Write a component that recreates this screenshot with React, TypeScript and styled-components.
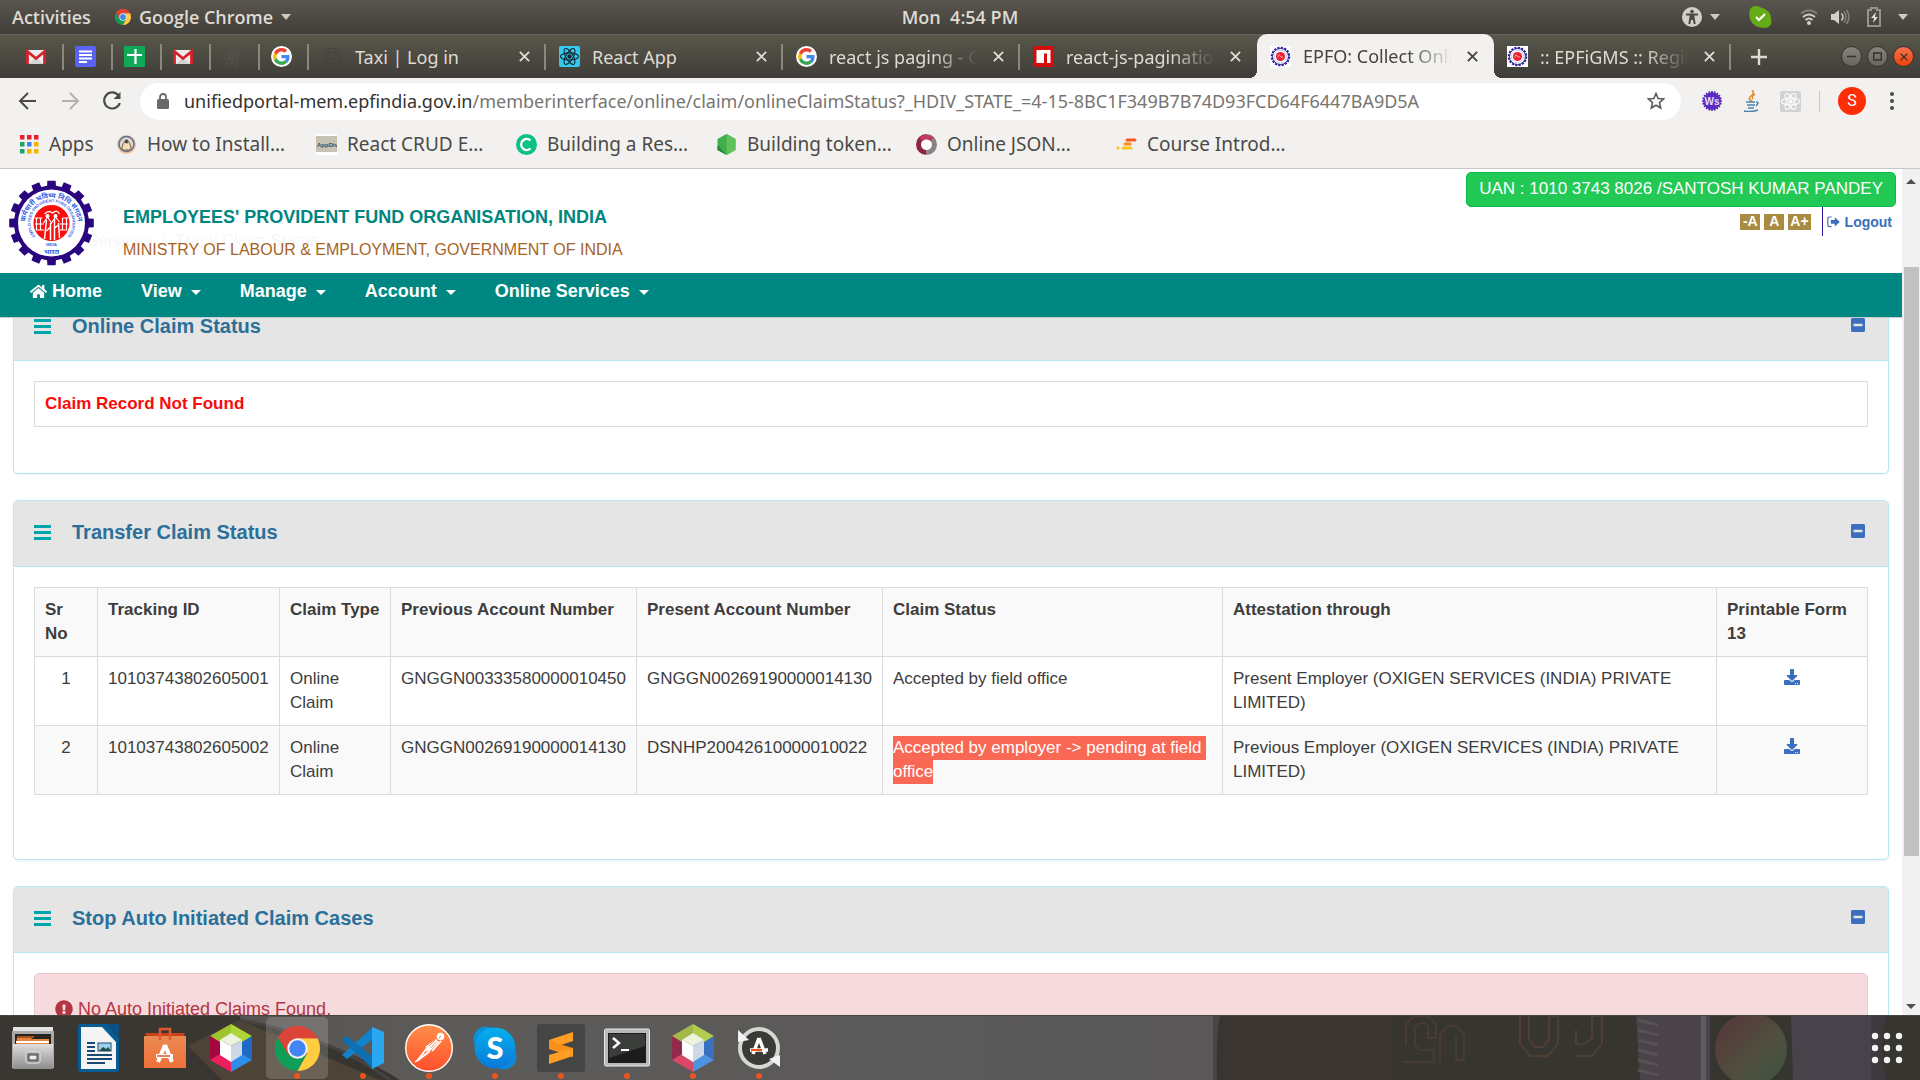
import React from "react";
import styled, { createGlobalStyle, css } from "styled-components";
import { FaHome, FaMinusSquare, FaDownload, FaExclamationCircle } from "react-icons/fa";

const UI_FONT = `"Noto Sans", "Open Sans", sans-serif`;
const PAGE_FONT = `"Liberation Sans", Arial, sans-serif`;

const GlobalStyle = createGlobalStyle`
  *, *::before, *::after { box-sizing: border-box; }
  body { margin: 0; background: #35342f; }
  button { font: inherit; color: inherit; border: 0; padding: 0; background: none; cursor: pointer; }
  a { color: inherit; text-decoration: none; }
  svg { display: block; flex: none; }
`;

const Desktop = styled.div`
  display: flex;
  flex-direction: column;
  height: 100vh;
  overflow: hidden;
  font-family: ${UI_FONT};
`;

/* ---------- system bar ---------- */

const SystemBar = styled.header`
  display: grid;
  grid-template-columns: 1fr auto 1fr;
  align-items: center;
  flex: none;
  height: 34px;
  padding: 0 12px;
  color: #dfdbd2;
  background: linear-gradient(#5a554e, #403e39);
  font-family: "Open Sans", "Noto Sans", sans-serif;
  font-size: 18px;
  font-weight: 600;
  line-height: 24px;
  white-space: pre;
`;

const SystemGroup = styled.div<{ $end?: boolean }>`
  display: flex;
  align-items: center;
  gap: 24px;
  justify-content: ${(p) => (p.$end ? "flex-end" : "flex-start")};
`;

const SystemButton = styled.button`
  display: flex;
  align-items: center;
  gap: 8px;
`;

/* ---------- tab strip ---------- */

const TabStrip = styled.div`
  display: flex;
  align-items: stretch;
  flex: none;
  height: 44px;
  padding-left: 15px;
  background: linear-gradient(#58574b, #3f3d38);
  border-top: 1px solid #66645a;
`;

const tabSeparator = css`
  &::after {
    content: "";
    flex: none;
    width: 2px;
    height: 26px;
    background: #8b897f;
  }
`;

const PinnedTab = styled.button`
  display: flex;
  align-items: center;
  width: 49px;
  padding-left: 11px;
  justify-content: space-between;
  ${tabSeparator}
`;

const Tab = styled.div<{ $active?: boolean; $plain?: boolean }>`
  position: relative;
  display: flex;
  align-items: center;
  flex: 0 1 237px;
  min-width: 0;
  gap: 12px;
  padding-left: 13px;
  color: #dfdbd2;
  ${(p) => !p.$active && !p.$plain && tabSeparator}
  ${(p) =>
    p.$active &&
    css`
      color: #45433f;
      background: #f2f1f0;
      border-radius: 10px 10px 0 0;
      margin-top: -1px;
      padding-right: 14px;
      &::before,
      &::after {
        content: "";
        position: absolute;
        bottom: 0;
        width: 8px;
        height: 8px;
      }
      &::before {
        left: -8px;
        background: radial-gradient(circle at 0 0, transparent 8px, #f2f1f0 8px);
      }
      &::after {
        right: -8px;
        background: radial-gradient(circle at 100% 0, transparent 8px, #f2f1f0 8px);
      }
    `}
  ${(p) => p.$plain && css`padding-right: 14px;`}
`;

const TabTitle = styled.span<{ $fade?: boolean }>`
  flex: 1;
  min-width: 0;
  overflow: hidden;
  white-space: nowrap;
  font-size: 18px;
  line-height: 26px;
  ${(p) => p.$fade && css`mask-image: linear-gradient(90deg, #000 70%, transparent);`}
`;

const TabClose = styled.button`
  display: flex;
  align-items: center;
  justify-content: center;
  width: 16px;
  height: 24px;
`;

const NewTab = styled.button`
  display: flex;
  align-items: center;
  justify-content: center;
  width: 56px;
  color: #dfdbd2;
`;

const WindowButtons = styled.div`
  display: flex;
  align-items: center;
  gap: 5px;
  margin-left: auto;
  padding-right: 6px;
`;

const WindowButton = styled.button<{ $close?: boolean }>`
  display: flex;
  align-items: center;
  justify-content: center;
  width: 21px;
  height: 21px;
  border: 1px solid #33322d;
  border-radius: 50%;
  color: #33322d;
  background: ${(p) => (p.$close ? "linear-gradient(#f7734c, #ee4208)" : "linear-gradient(#85837b, #66645d)")};
`;

/* ---------- toolbar and bookmarks ---------- */

const Toolbar = styled.div`
  display: flex;
  align-items: center;
  flex: none;
  height: 46px;
  padding: 0 24px 0 16px;
  background: #f2f1f0;
  color: #4b4a46;
`;

const NavButtons = styled.div`
  display: flex;
  gap: 18px;
  padding-right: 16px;
`;

const AddressBar = styled.form`
  display: flex;
  align-items: center;
  flex: 1;
  min-width: 0;
  height: 37px;
  padding: 0 16px;
  gap: 14px;
  border-radius: 19px;
  background: #fff;
`;

const AddressBox = styled.div`
  flex: 1;
  min-width: 0;
  font-size: 18px;
  line-height: 26px;
  color: #77756f;
  white-space: nowrap;
  overflow: hidden;
`;

const AddressHost = styled.span`
  color: #33322f;
`;

const ToolbarIcons = styled.div`
  display: flex;
  align-items: center;
  gap: 18px;
  padding-left: 20px;
`;

const Divider = styled.span`
  width: 1px;
  height: 21px;
  background: #c9c7c4;
`;

const Avatar = styled.button`
  width: 28px;
  height: 28px;
  border-radius: 50%;
  color: #fff;
  background: #fb2e06;
  font-family: Roboto, sans-serif;
  font-size: 16px;
  line-height: 28px;
`;

const BookmarkBar = styled.nav`
  display: flex;
  align-items: center;
  flex: none;
  height: 45px;
  padding-left: 18px;
  padding-bottom: 4px;
  background: #f2f1f0;
  border-bottom: 1px solid #c9c7c5;
  color: #4b4a46;
  font-size: 19px;
  line-height: 26px;
`;

const Bookmark = styled.a<{ $short?: boolean }>`
  display: flex;
  align-items: center;
  gap: 10px;
  width: ${(p) => (p.$short ? "98px" : "200px")};
  white-space: nowrap;
`;

/* ---------- portal page ---------- */

const Viewport = styled.div`
  display: flex;
  flex: 1;
  min-height: 0;
  background: #fff;
  font-family: ${PAGE_FONT};
`;

const PageArea = styled.div`
  position: relative;
  flex: 1;
  min-width: 0;
  overflow: hidden;
`;

const PageHeader = styled.div`
  position: absolute;
  inset: 0 0 auto 0;
  z-index: 1;
`;

const Masthead = styled.div`
  display: flex;
  align-items: flex-start;
  height: 104px;
  padding: 3px 6px 0 9px;
  background: rgba(255, 255, 255, 0.93);
`;

const MastheadTitles = styled.div`
  flex: 1;
  padding: 33px 0 0 29px;
`;

const OrgName = styled.h1`
  margin: 0;
  color: #00857f;
  font-size: 18px;
  line-height: 24px;
`;

const Ministry = styled.p`
  margin: 9px 0 0;
  color: #a8641e;
  font-size: 16px;
  line-height: 24px;
`;

const LogoSlot = styled.div`
  padding-top: 8px;
`;

const MastheadSide = styled.div`
  display: flex;
  flex-direction: column;
  align-items: flex-end;
`;

const UanBadge = styled.button`
  height: 35px;
  padding: 0 12px 2px;
  border: 1px solid #0eb848;
  border-radius: 5px;
  color: #fff;
  background: #22c955;
  font-size: 17px;
  line-height: 31px;
`;

const AccountTools = styled.div`
  display: flex;
  gap: 4px;
  align-items: center;
  height: 29px;
  padding-right: 4px;
`;

const FontSizeButton = styled.button`
  min-width: 20px;
  height: 16px;
  padding: 0 2px;
  color: #fff;
  background: #a98b41;
  font-size: 14px;
  font-weight: 700;
  line-height: 15px;
`;

const Logout = styled.a`
  display: flex;
  align-items: center;
  gap: 5px;
  height: 29px;
  margin-left: 7px;
  padding-left: 4px;
  border-left: 1px solid #2e1a9b;
  color: #3a6fbd;
  font-size: 14px;
  font-weight: 700;
`;

const NavBar = styled.nav`
  display: flex;
  gap: 39px;
  height: 45px;
  padding: 6px 30px 0;
  background: #008782;
  border-bottom: 1px solid #c4cfce;
  color: #fff;
  font-size: 18px;
  font-weight: 700;
  line-height: 24px;
`;

const NavItem = styled.a<{ $tight?: boolean }>`
  display: flex;
  align-items: center;
  height: 24px;
  gap: ${(p) => (p.$tight ? "5px" : "9px")};
`;

const Caret = styled.span`
  width: 0;
  height: 0;
  margin-top: 3px;
  border: 5px solid transparent;
  border-top-color: currentColor;
  border-bottom: 0;
`;

const PageContent = styled.main`
  padding: 60px 13px 0;
`;

const Breadcrumb = styled.p`
  margin: 0;
  padding-left: 20px;
  color: #6c757d;
  font-size: 17px;
  line-height: 24px;
  white-space: pre;
`;

const Panel = styled.section`
  margin-bottom: 26px;
  border: 1px solid #b5e8ef;
  border-radius: 5px;
  background: #fff;
  box-shadow: 0 1px 2px rgba(0, 0, 0, 0.06);
  &:first-of-type {
    margin-top: 41px;
  }
`;

const PanelHeading = styled.div`
  display: flex;
  align-items: center;
  height: 66px;
  padding: 0 22px 3px 20px;
  border-bottom: 1px solid #b5e8ef;
  border-radius: 4px 4px 0 0;
  background: #e5e5e5;
  color: #00a5ac;
`;

const PanelTitle = styled.h2`
  flex: 1;
  margin: 0 0 0 21px;
  color: #2c6f99;
  font-size: 20px;
  line-height: 24px;
`;

const CollapseButton = styled.button`
  padding-bottom: 2px;
  color: #3a6fbd;
`;

const PanelBody = styled.div<{ $space: number }>`
  padding: 20px 20px ${(p) => p.$space}px;
`;

const EmptyNotice = styled.p`
  height: 46px;
  margin: 0;
  padding: 10px;
  border: 1px solid #dcdcdc;
  color: #f90b0b;
  font-size: 17px;
  font-weight: 700;
  line-height: 24px;
`;

const ClaimTable = styled.table`
  width: 100%;
  border-collapse: collapse;
  table-layout: fixed;
  color: #3d3d3d;
  font-size: 17px;
  line-height: 24px;

  th,
  td {
    padding: 10px 8px 10px 10px;
    border: 1px solid #dadbdb;
    text-align: left;
    vertical-align: top;
  }
  thead tr,
  tbody tr:nth-child(even) {
    background: #f9f9f9;
  }
`;

const Column = styled.col<{ $width?: number }>`
  width: ${(p) => (p.$width ? `${p.$width}px` : "auto")};
`;

const CenteredCell = styled.td`
  && {
    padding: 10px;
    text-align: center;
  }
`;

const StatusCell = styled.td`
  white-space: break-spaces;
`;

const Selected = styled.span`
  padding: 2px 0 3px;
  color: #fff;
  background: #f96854;
`;

const DownloadLink = styled.a`
  display: flex;
  justify-content: center;
  padding-top: 2px;
  color: #3a6fbd;
`;

const Alert = styled.p`
  display: flex;
  align-items: center;
  gap: 5px;
  margin: 0;
  height: 72px;
  padding: 0 20px;
  border: 1px solid #efc8ce;
  border-radius: 5px;
  background: #f5dbde;
  color: #b43442;
  font-size: 18px;
  line-height: 24px;
`;

const ScrollTrack = styled.div`
  display: flex;
  flex-direction: column;
  align-items: center;
  width: 18px;
  padding: 10px 0 6px;
  background: #f1f1f1;
`;

const ScrollThumb = styled.div`
  width: 15px;
  height: 71%;
  margin: 83px 0 auto;
  background: #c1c1c1;
`;

const ScrollArrow = styled.span<{ $down?: boolean }>`
  width: 0;
  height: 0;
  border: 5px solid transparent;
  ${(p) => (p.$down ? "border-top-color: #505050; border-bottom: 0;" : "border-bottom-color: #505050; border-top: 0;")}
`;

/* ---------- dock ---------- */

const Dock = styled.footer`
  position: relative;
  display: flex;
  align-items: stretch;
  flex: none;
  height: 65px;
  border-top: 1px solid #45443f;
  background: #363530;
`;

const DockWallpaper = styled.svg`
  position: absolute;
  inset: 0;
  width: 100%;
  height: 100%;
`;

const DockItem = styled.button<{ $active?: boolean; $running?: boolean }>`
  position: relative;
  display: flex;
  align-items: center;
  justify-content: center;
  width: 62px;
  height: 62px;
  margin: 1px 2px;
  border-radius: 5px;
  background: ${(p) => (p.$active ? "rgba(255, 255, 255, 0.17)" : "none")};
  ${(p) =>
    p.$running &&
    css`
      &::after {
        content: "";
        position: absolute;
        bottom: 0;
        left: 28px;
        width: 6px;
        height: 6px;
        border-radius: 50%;
        background: #e95420;
      }
    `}
`;

const AppsButton = styled.button`
  position: relative;
  margin-left: auto;
  padding-right: 17px;
`;

/* ---------- drawings ---------- */

const DownTriangle = () => (
  <svg width="10" height="6" viewBox="0 0 10 6"><path d="M0 0h10L5 6z" fill="#cfcbc2" /></svg>
);

const CloseX = ({ size = 11 }: { size?: number }) => (
  <svg width={size} height={size} viewBox="0 0 10 10"><path d="M.8.8l8.400 8.400M9.200.8L.8 9.200" stroke="currentColor" strokeWidth="1.700" /></svg>
);

const MenuBars = () => (
  <svg width="17" height="15" viewBox="0 0 17 15"><path d="M0 0h17v3H0zM0 6h17v3H0zM0 12h17v3H0z" fill="currentColor" /></svg>
);

const ChromeIcon = ({ size }: { size: number }) => (
  <svg width={size} height={size} viewBox="0 0 44 44">
    <circle cx="22" cy="22" r="22" fill="#db4437" />
    <path d="M2.900 11A22 22 0 0 0 22 44L31.500 27.500 12.500 27.500z" fill="#0f9d58" />
    <path d="M22 12H41.600A22 22 0 0 1 22 44L31.500 27z" fill="#ffcd40" />
    <path d="M2.900 11A22 22 0 0 1 41.600 12H22L12 22z" fill="#db4437" />
    <circle cx="22" cy="22" r="10" fill="#f1f1f1" />
    <circle cx="22" cy="22" r="8" fill="#4285f4" />
  </svg>
);

const GmailIcon = () => (
  <svg width="20" height="16" viewBox="0 0 20 16">
    <rect x="1" y="1" width="18" height="14" rx="1" fill="#ececec" />
    <path d="M3 15l7-7 7 7z" fill="#d4d4d4" />
    <path d="M1.500 15V2.500L10 9.500l8.500-7V15" fill="none" stroke="#d8222a" strokeWidth="2.800" />
  </svg>
);

const DocsIcon = () => (
  <svg width="21" height="21" viewBox="0 0 21 21">
    <rect width="21" height="21" rx="2" fill="#5b63f5" />
    <path d="M4 5.500h13M4 9h13M4 12.500h13M4 16h8" stroke="#fff" strokeWidth="1.900" />
  </svg>
);

const SheetsIcon = () => (
  <svg width="21" height="21" viewBox="0 0 21 21">
    <rect width="21" height="21" rx="1" fill="#0fa958" />
    <path d="M3 9h15M11.500 3v15" stroke="#fff" strokeWidth="2.200" />
  </svg>
);

const Atom = ({ stroke, bg, r = 2 }: { stroke: string; bg?: string; r?: number }) => (
  <svg width="21" height="21" viewBox="0 0 21 21" fill="none" stroke={stroke} strokeWidth="1.100">
    {bg && <rect width="21" height="21" rx={r} fill={bg} stroke="none" />}
    <ellipse cx="10.500" cy="10.500" rx="9" ry="3.600" />
    <ellipse cx="10.500" cy="10.500" rx="9" ry="3.600" transform="rotate(60 10.500 10.500)" />
    <ellipse cx="10.500" cy="10.500" rx="9" ry="3.600" transform="rotate(120 10.500 10.500)" />
    <circle cx="10.500" cy="10.500" r="1.600" fill={stroke} />
  </svg>
);

const GoogleIcon = () => (
  <svg width="21" height="21" viewBox="0 0 48 48">
    <circle cx="24" cy="24" r="24" fill="#fff" />
    <g transform="translate(4.800 4.800) scale(.8)">
      <path fill="#EA4335" d="M24 9.500c3.540 0 6.710 1.220 9.210 3.600l6.850-6.850C35.900 2.380 30.470 0 24 0 14.620 0 6.510 5.380 2.560 13.220l7.980 6.190C12.430 13.720 17.740 9.500 24 9.500z" />
      <path fill="#4285F4" d="M46.980 24.550c0-1.570-.15-3.090-.38-4.550H24v9.020h12.940c-.58 2.960-2.260 5.480-4.780 7.180l7.730 6c4.510-4.180 7.090-10.360 7.090-17.650z" />
      <path fill="#FBBC05" d="M10.530 28.590c-.48-1.450-.76-2.990-.76-4.590s.27-3.140.76-4.590l-7.980-6.190C.92 16.460 0 20.120 0 24c0 3.880.92 7.540 2.560 10.780l7.970-6.190z" />
      <path fill="#34A853" d="M24 48c6.480 0 11.930-2.130 15.890-5.810l-7.730-6c-2.150 1.450-4.920 2.300-8.160 2.300-6.260 0-11.570-4.220-13.470-9.910l-7.980 6.190C6.510 42.620 14.620 48 24 48z" />
    </g>
  </svg>
);

const FirefoxGhost = () => (
  <svg width="21" height="21" viewBox="0 0 21 21" fill="none" stroke="#45443f" strokeWidth="1.500">
    <circle cx="10.500" cy="10.500" r="8" />
    <path d="M5 9c2-4 8-4 10-1-2 0-3 1-2 3s-3 3-5 1" />
  </svg>
);

const NpmIcon = () => (
  <svg width="21" height="21" viewBox="0 0 21 21">
    <rect width="21" height="21" fill="#d50c0c" />
    <path d="M3.500 4h14v13h-3.500V7.500h-3V17H3.500z" fill="#fff" />
  </svg>
);

const gearPath = (teeth: number, outer: number, inner: number) => {
  const step = (Math.PI * 2) / teeth;
  const at = (a: number, r: number) => `${(Math.sin(a) * r).toFixed(2)} ${(-Math.cos(a) * r).toFixed(2)}`;
  let d = "";
  for (let i = 0; i < teeth; i++) {
    const a = i * step;
    d += `${i ? "L" : "M"}${at(a - step * 0.3, inner)}L${at(a - step * 0.25, outer)}L${at(a + step * 0.25, outer)}L${at(a + step * 0.3, inner)}`;
  }
  return d + "Z";
};

const EpfoIcon = () => (
  <svg width="21" height="21" viewBox="-10.500 -10.500 21 21">
    <rect x="-10.500" y="-10.500" width="21" height="21" fill="#fff" />
    <circle r="8.800" fill="none" stroke="#2d2596" strokeWidth="2" strokeDasharray="2.200 1.256" />
    <circle r="8" fill="none" stroke="#2d2596" strokeWidth="1" />
    <circle r="6.200" fill="none" stroke="#c9cdf2" strokeWidth="1" />
    <circle r="4.600" fill="#ef1f32" />
    <path d="M-2.500 1c0-3 2-3 2.500-1s2-1 2.500 1" fill="none" stroke="#ffb9bf" />
  </svg>
);

const EpfoLogo = () => (
  <svg width="85" height="86" viewBox="-42.500 -43 85 86">
    <path d={gearPath(16, 42.500, 37.500)} fill="#29067e" />
    <circle r="33.500" fill="#fff" />
    <defs>
      <path id="ring-hindi" d="M-22 16A26.500 26.500 0 1 1 22 16" />
      <path id="ring-name" d="M-13 16.500A21 21 0 1 1 13 16.500" />
    </defs>
    <g fill="#2f62e8" fontFamily="Noto Sans, sans-serif">
      <text fontSize="7" fontWeight="700"><textPath href="#ring-hindi" startOffset="50%" textAnchor="middle">कर्मचारी भविष्य निधि संगठन</textPath></text>
      <text fontFamily="Liberation Sans" fontWeight="700" fontSize="4"><textPath href="#ring-name" startOffset="50%" textAnchor="middle">EMPLOYEES PROVIDENT FUND ORGANISATION</textPath></text>
      <text fontFamily="Liberation Sans" fontWeight="700" fontSize="4" y="23" textAnchor="middle">INDIA</text>
      <text fontSize="7" fontWeight="700" y="31" textAnchor="middle">भारत</text>
    </g>
    <circle r="18" fill="#fb0d0d" />
    <g stroke="#fff" strokeWidth="1.200" fill="none">
      <path d="M-17-5h8M-16.500 1h9M-15.500 7h8M-15-5v12M-11-5v12" />
      <path d="M17-5h-6M16.500 1h-8M15.500 7h-7M15-5v12M11-5v12" />
      <path d="M-7-9q4-4 8-1q5-4 7 1M-8 0l4-6 4 6 4-6 4 5" />
      <path d="M-5-3l-2 19M-1 0v17M3-4v21M7 0l1 15M-5 8l4-4M3 5l4-3" strokeWidth="1.500" />
    </g>
    <circle cx="-4" cy="-7" r="2" fill="#fff" />
    <circle cx="4" cy="-7" r="2" fill="#fff" />
  </svg>
);

const SignOutIcon = () => (
  <svg width="13" height="12" viewBox="0 0 13 12">
    <path d="M4.500 1H2.500Q.8 1 .8 2.700V9Q.8 10.700 2.500 10.700H4.500" fill="none" stroke="currentColor" strokeWidth="1.200" />
    <path d="M3.800 4.100h4V1.300L12.800 5.900 7.800 10.500V7.700h-4z" fill="currentColor" />
  </svg>
);

const Arrow = ({ flip, color }: { flip?: boolean; color: string }) => (
  <svg width="24" height="24" viewBox="0 0 24 24" fill="none" stroke={color} strokeWidth="2">
    <path d={flip ? "M4 12h15M12 4l8 8-8 8" : "M20 12H5M12 4l-8 8 8 8"} />
  </svg>
);

const CubeIcon = ({ muted }: { muted?: boolean }) => (
  <svg width="48" height="48" viewBox="0 0 48 48">
    <path d="M24 0l21 12-10 7-11-7z" fill={muted ? "#b3cc52" : "#add537"} />
    <path d="M24 0L3 12l10 7 11-7z" fill={muted ? "#a3b848" : "#9fc42f"} />
    <path d="M3 12v24l10-6V18z" fill={muted ? "#922b4b" : "#a5073e"} />
    <path d="M45 12v24l-10-6V18z" fill={muted ? "#3a70c0" : "#1f6ac6"} />
    <path d="M3 36l21 12V37l-11-7z" fill={muted ? "#d94766" : "#ea1f5c"} />
    <path d="M45 36L24 48V37l11-7z" fill={muted ? "#4d93de" : "#2c8ee8"} />
    <path d="M24 9l11 7-11 6-11-6z" fill="#eef3df" />
    <path d="M13 16l11 6v16l-11-7z" fill="#fff" />
    <path d="M35 16l-11 6v16l11-7z" fill="#cdd9e6" />
  </svg>
);

const FilesIcon = () => (
  <svg width="44" height="46" viewBox="0 0 44 46">
    <defs><linearGradient id="metal" x1="0" y1="0" x2="0" y2="1"><stop offset="0" stopColor="#dedede" /><stop offset="1" stopColor="#8d8d8d" /></linearGradient></defs>
    <path d="M2 2h40v5H2z" fill="#e4e4e4" />
    <path d="M1 6h42v37H1z" fill="#a9a9a9" />
    <path d="M4 9h36v12H4z" fill="#29231f" />
    <path d="M6 12h13l2 2h17v7H5z" fill="#e8843c" />
    <path d="M6 11h17v2H6z" fill="#a4511b" />
    <path d="M5 16h33v2H5z" fill="#fff" />
    <path d="M2 19h40v25H2z" fill="url(#metal)" />
    <rect x="15" y="27" width="14" height="11" rx="2" fill="#8a8a8a" stroke="#ececec" />
    <rect x="18" y="30" width="8" height="5" fill="#eee" stroke="#444" />
  </svg>
);

const WriterIcon = () => (
  <svg width="42" height="48" viewBox="0 0 42 48">
    <path d="M3 0h25l13 14v31q0 3-3 3H3q-3 0-3-3V3q0-3 3-3z" fill="#075c96" />
    <path d="M28 0h11q2 0 2 2v11z" fill="#0a4f85" />
    <path d="M3 3h21l14 15v27H3z" fill="#f4f4f4" />
    <path d="M9 19h8M9 23h8M9 27h8M9 31h25M9 35h25M9 39h18" stroke="#1a4a74" strokeWidth="2" />
    <rect x="20" y="19" width="13" height="8" fill="#9fd0ee" stroke="#1a4a74" />
    <path d="M21 27l4-4 3 2 2-2 3 4z" fill="#1d4d40" />
  </svg>
);

const SoftwareIcon = () => (
  <svg width="42" height="46" viewBox="0 0 42 46">
    <defs><linearGradient id="bag" x1="0" y1="0" x2="0" y2="1"><stop offset="0" stopColor="#e98a52" /><stop offset="1" stopColor="#f0703a" /></linearGradient></defs>
    <path d="M1 8h40l-2 4H3z" fill="#c9401a" />
    <path d="M0 11h42v32H0z" fill="url(#bag)" />
    <path d="M16 15V4h10v11" fill="none" stroke="#e0572a" strokeWidth="2.500" />
    <path d="M21 20l-7 17M21 20l7 17" stroke="#fff" strokeWidth="4" />
    <path d="M12 31h17" stroke="#fff" strokeWidth="4" />
    <path d="M13 31h13" stroke="#e0572a" strokeWidth="1.500" />
  </svg>
);

const CodeIcon = () => (
  <svg width="44" height="44" viewBox="0 0 44 44">
    <path d="M32 1v12L6 33l-5-4z" fill="#1183cc" />
    <path d="M32 43V31L6 10l-5 4z" fill="#0e6fb3" />
    <path d="M31 1l12 5v31l-12 6z" fill="#29a7f2" />
  </svg>
);

const PostmanIcon = () => (
  <svg width="48" height="48" viewBox="0 0 48 48">
    <defs><linearGradient id="post" x1="0" y1="0" x2="0" y2="1"><stop offset="0" stopColor="#ff8f4a" /><stop offset="1" stopColor="#ff4f2b" /></linearGradient></defs>
    <circle cx="24" cy="24" r="23.300" fill="url(#post)" stroke="#fff" strokeWidth="1.400" />
    <circle cx="35.500" cy="12.500" r="3.800" fill="#fff" />
    <path d="M33.500 14.500l2.500-2.500" stroke="#ff7a40" />
    <path d="M31 15l3 3-8 8-5 2 1-4-2-1z" fill="#fff" />
    <path d="M22 24L12 37M25 27L12 37M36 17l-9 10" stroke="#fff" strokeWidth="1.800" />
    <path d="M10 38l5-4" stroke="#fff" strokeWidth="1.500" />
    <path d="M24 22l6-6M25.500 24l6-6" stroke="#ff7440" strokeWidth=".8" />
  </svg>
);

const SkypeIcon = () => (
  <svg width="44" height="44" viewBox="0 0 44 44">
    <defs><linearGradient id="sky" x1="0" y1="0" x2="0" y2="1"><stop offset="0" stopColor="#06b0ef" /><stop offset="1" stopColor="#0a78d6" /></linearGradient></defs>
    <circle cx="13" cy="13" r="12.500" fill="#0a8fd8" />
    <circle cx="31" cy="31" r="12.500" fill="#1187d8" />
    <circle cx="22" cy="22" r="20.500" fill="url(#sky)" />
    <text x="22" y="33" textAnchor="middle" fill="#fff" fontFamily="Lato, sans-serif" fontWeight="900" fontSize="31">S</text>
  </svg>
);

const SublimeIcon = () => (
  <svg width="48" height="48" viewBox="0 0 48 48">
    <rect width="48" height="48" rx="3" fill="#454545" />
    <path d="M12 16l24-8v9l-24 8z" fill="#ff9d24" />
    <path d="M12 16v9l24 8v-9l-14-4z" fill="#f9901c" />
    <path d="M12 31l24-7v8l-24 8z" fill="#ff9d24" />
  </svg>
);

const TerminalIcon = () => (
  <svg width="46" height="40" viewBox="0 0 46 40">
    <rect x=".5" y="1" width="45" height="37" rx="1.500" fill="#b8bab8" stroke="#e8e8e8" />
    <rect x="4" y="5" width="38" height="30" fill="#1c1c1c" />
    <path d="M5 6h36v12L5 30z" fill="#3b3d3b" />
    <path d="M9 10l6 5-6 5" fill="none" stroke="#fff" strokeWidth="2.500" />
    <path d="M17 22h8" stroke="#fff" strokeWidth="2" />
  </svg>
);

const UpdaterIcon = () => (
  <svg width="44" height="44" viewBox="0 0 44 44">
    <circle cx="22" cy="22" r="18" fill="#3b3a36" />
    <circle cx="22" cy="22" r="19" fill="none" stroke="#d6d6d2" strokeWidth="4" />
    <path d="M1 4v12l11-2zM43 29v12l-11-8z" fill="#f2f2f2" />
    <path d="M22 12l-6 16M22 12l6 16" stroke="#fff" strokeWidth="3.500" />
    <path d="M13 24h18" stroke="#fff" strokeWidth="3.500" />
    <path d="M14 24h11" stroke="#f0501a" strokeWidth="2" />
  </svg>
);

const Grid = ({ cells, gap, draw, w }: { cells: string[]; gap: number; w: number; draw: (x: number, y: number, c: string) => React.ReactNode }) => (
  <svg width={w} height={w} viewBox={`0 0 ${w} ${w}`}>
    {cells.map((c, i) => <g key={i}>{draw((i % 3) * gap, Math.floor(i / 3) * gap, c)}</g>)}
  </svg>
);

const Wallpaper = () => (
  <DockWallpaper viewBox="0 0 1920 64" preserveAspectRatio="none" aria-hidden="true">
    <defs>
      <linearGradient id="disc" x1="0" y1="0" x2="1" y2="1"><stop offset="0" stopColor="#56363e" /><stop offset=".3" stopColor="#54413b" /><stop offset=".6" stopColor="#4f5040" /><stop offset="1" stopColor="#3d5341" /></linearGradient>
      <linearGradient id="slab" x1="0" y1="0" x2="1" y2="0"><stop offset="0" stopColor="#555452" /><stop offset=".2" stopColor="#5c5b58" /><stop offset="1" stopColor="#5a585a" /></linearGradient>
    </defs>
    <path d="M0 0h250L350 64H0z" fill="#3a3733" />
    <path d="M188 30Q225 10 240 4L380 64H222z" fill="#4d4336" />
    <path d="M240 0H1213V64H400Q330 20 240 4z" fill="url(#slab)" />
    <path d="M240 4Q330 20 390 64" fill="none" stroke="#46423f" strokeWidth="3" />
    <path d="M1213 0h7q-4 20-3 64h-4z" fill="#484542" />
    <path d="M1222 0h170v64h-173z" fill="#3a3531" />
    <g fill="none" strokeWidth="2">
      <path d="M1406 30V8l8-8h14l8 8v14h-8V10l-4-3h-4l-5 4v18l5 5h14v12h-30M1440 46V18l8-8h8l8 8v26h-8V20" stroke="#493a33" />
      <path d="M1520 0v28l10 12h18l10-12V0h-9v24l-6 7h-8l-6-7V0M1576 14v14h8l8-6V0h10v28l-10 12h-16" stroke="#4f3f32" />
    </g>
    <path d="M1636 0h74v64h-70z" fill="#4a434a" />
    <path d="M1638 4l20 5M1638 14l20 5M1638 24l20 5M1638 34l20 5M1638 44l20 5M1638 54l20 5" stroke="#57524f" strokeWidth="3" />
    <path d="M1701 0h5v64h-5z" fill="#605b62" />
    <ellipse cx="1751" cy="33" rx="36" ry="36" fill="url(#disc)" />
    <path d="M1791 0h80v64h-78z" fill="#48424a" />
    <path d="M1871 0h16q-10 30 0 64h-16z" fill="#3e383f" />
  </DockWallpaper>
);

/* ---------- data ---------- */

const pinned = [
  { name: "Gmail", icon: <GmailIcon /> },
  { name: "Docs", icon: <DocsIcon /> },
  { name: "Sheets", icon: <SheetsIcon /> },
  { name: "Gmail inbox", icon: <GmailIcon /> },
  { name: "React", icon: <Atom stroke="#53524c" /> },
  { name: "Google", icon: <GoogleIcon /> },
];

const tabs = [
  { title: "Taxi | Log in", icon: <FirefoxGhost /> },
  { title: "React App", icon: <Atom stroke="#10262d" bg="#35c9f0" /> },
  { title: "react js paging - Google Search", icon: <GoogleIcon />, fade: true },
  { title: "react-js-pagination - npm", icon: <NpmIcon />, fade: true, plain: true },
  { title: "EPFO: Collect Online Claim", icon: <EpfoIcon />, fade: true, active: true },
  { title: ":: EPFiGMS :: Register", icon: <EpfoIcon />, fade: true },
];

const bookmarks = [
  {
    label: "How to Install…",
    icon: (
      <svg width="21" height="21" viewBox="0 0 21 21"><circle cx="10.500" cy="10.500" r="9.500" fill="#f0c49a" /><circle cx="10.500" cy="10" r="7.500" fill="#dfd5c9" stroke="#5b6c9b" strokeWidth="1.500" /><path d="M6 16c0-5 2-9 4.500-9s4.500 4 4.500 9z" fill="#f3dfb5" stroke="#6b5a4a" /><circle cx="10.500" cy="7.500" r="2" fill="#4a4a55" /></svg>
    ),
  },
  {
    label: "React CRUD E…",
    icon: (
      <svg width="21" height="21" viewBox="0 0 21 21"><path d="M0 0h21v21H0z" fill="#fff" /><path d="M0 2h21v16H0z" fill="#c6c2b4" /><text x="1" y="12.500" fontFamily="Liberation Sans" fontSize="6" fontWeight="700" fill="#4b4a42">AppDiv</text></svg>
    ),
  },
  {
    label: "Building a Res…",
    icon: (
      <svg width="21" height="21" viewBox="0 0 21 21"><circle cx="10.500" cy="10.500" r="10.500" fill="#0cc285" /><path d="M14.500 6.500a5.500 5.500 0 1 0 0 8" fill="none" stroke="#fff" strokeWidth="2.400" /></svg>
    ),
  },
  {
    label: "Building token…",
    icon: (
      <svg width="21" height="21" viewBox="0 0 21 21"><path d="M10.500 0l9 5v11l-9 5-9-5V5z" fill="#3fae4b" /><path d="M10.500 0l9 5v11l-9 5z" fill="#60c25c" /><path d="M1.500 11l9 10-9-5z" fill="#1f8a3c" /></svg>
    ),
  },
  {
    label: "Online JSON…",
    icon: (
      <svg width="21" height="21" viewBox="0 0 21 21" fill="none" strokeWidth="5"><path d="M10.500 2.500a8 8 0 0 0 0 16" stroke="#8d2741" /><path d="M10.500 2.500a8 8 0 0 1 0 16" stroke="#8b8387" /><path d="M5 5.500a8 8 0 0 1 11 0" stroke="#c13a5c" /><circle cx="10.500" cy="10.500" r="5" fill="#fff" stroke="none" /></svg>
    ),
  },
  {
    label: "Course Introd…",
    icon: (
      <svg width="21" height="21" viewBox="0 0 21 21" strokeLinecap="round" strokeWidth="3"><path d="M11 6h8" stroke="#f4591f" /><path d="M9 10h5" stroke="#fb8c1e" /><path d="M7 14h8M2 14h.1" stroke="#fcc41e" /></svg>
    ),
  },
];

const claims = [
  { id: "10103743802605001", prev: "GNGGN00333580000010450", now: "GNGGN00269190000014130", status: "Accepted by field office", by: "Present Employer (OXIGEN SERVICES (INDIA) PRIVATE LIMITED)" },
  { id: "10103743802605002", prev: "GNGGN00269190000014130", now: "DSNHP20042610000010022", status: "Accepted by employer -> pending at field office", by: "Previous Employer (OXIGEN SERVICES (INDIA) PRIVATE LIMITED)", selected: true },
];

const dockApps = [
  { name: "Files", icon: <FilesIcon /> },
  { name: "LibreOffice Writer", icon: <WriterIcon /> },
  { name: "Ubuntu Software", icon: <SoftwareIcon /> },
  { name: "NetBeans", icon: <CubeIcon /> },
  { name: "Google Chrome", icon: <ChromeIcon size={45} />, active: true, running: true },
  { name: "Visual Studio Code", icon: <CodeIcon />, running: true },
  { name: "Postman", icon: <PostmanIcon />, running: true },
  { name: "Skype", icon: <SkypeIcon />, running: true },
  { name: "Sublime Text", icon: <SublimeIcon />, running: true },
  { name: "Terminal", icon: <TerminalIcon />, running: true },
  { name: "NetBeans IDE", icon: <CubeIcon muted />, running: true },
  { name: "Software Updater", icon: <UpdaterIcon />, running: true },
];

const ClaimPanel = ({ title, space, children }: { title: string; space: number; children: React.ReactNode }) => (
  <Panel>
    <PanelHeading>
      <MenuBars />
      <PanelTitle>{title}</PanelTitle>
      <CollapseButton aria-label={`Collapse ${title}`}><FaMinusSquare size={16} /></CollapseButton>
    </PanelHeading>
    <PanelBody $space={space}>{children}</PanelBody>
  </Panel>
);

export default function App() {
  return (
    <Desktop>
      <GlobalStyle />

      <SystemBar>
        <SystemGroup>
          <SystemButton>Activities</SystemButton>
          <SystemButton><ChromeIcon size={16} />Google Chrome<DownTriangle /></SystemButton>
        </SystemGroup>
        <span>Mon  4:54 PM</span>
        <SystemGroup $end>
          <SystemButton aria-label="Accessibility">
            <svg width="20" height="20" viewBox="0 0 20 20"><circle cx="10" cy="10" r="10" fill="#d3d0c9" /><circle cx="10" cy="4.500" r="1.800" fill="#4c4943" /><path d="M4 7.500h12M10 7v6M8.800 8l-1.500 9M11.200 8l1.500 9" stroke="#4c4943" strokeWidth="2" fill="none" /></svg>
            <DownTriangle />
          </SystemButton>
          <SystemButton aria-label="Skype status">
            <svg width="32" height="22" viewBox="0 0 32 22"><path d="M8 1Q12-1 17 1.500 27 4 27 13 29 20 22 22 9 22 6 13 4 4 8 1z" fill="#65ab18" /><path d="M12 11l3 3 6-6" fill="none" stroke="#fff" strokeWidth="2.200" /></svg>
          </SystemButton>
          <SystemButton aria-label="System menu">
            <svg width="18" height="16" viewBox="0 0 18 16" fill="none" strokeWidth="2"><path d="M1 4.500Q9-2 17 4.500" stroke="#85827b" /><path d="M3 8Q9 3 15 8M5.500 11Q9 8 12.500 11" stroke="#d3d0c9" /><circle cx="9" cy="14" r="2" fill="#d3d0c9" /></svg>
            <svg width="30" height="16" viewBox="-5 0 30 16"><path d="M0 5h3l5-4v14l-5-4H0z" fill="#d3d0c9" /><path d="M10.500 4.500q3 3.500 0 7" stroke="#d3d0c9" strokeWidth="1.500" fill="none" /><path d="M13 2.500q4 5.500 0 11M15.500 1q5 7 0 14" stroke="#85827b" strokeWidth="1.500" fill="none" /></svg>
            <svg width="26" height="20" viewBox="-2 0 26 20"><path d="M5 3V1h6v2h3v16H2V3z" fill="none" stroke="#96938c" strokeWidth="2" /><path d="M10 5l-5 6h3l-1 5 5-6H9z" fill="#dfdbd2" /></svg>
            <DownTriangle />
          </SystemButton>
        </SystemGroup>
      </SystemBar>

      <TabStrip>
        {pinned.map((p) => <PinnedTab key={p.name} aria-label={p.name}>{p.icon}</PinnedTab>)}
        {tabs.map((t) => (
          <Tab key={t.title} $active={t.active} $plain={t.plain}>
            {t.icon}
            <TabTitle $fade={t.fade}>{t.title}</TabTitle>
            <TabClose aria-label={`Close ${t.title}`}><CloseX /></TabClose>
          </Tab>
        ))}
        <NewTab aria-label="New tab">
          <svg width="16" height="16" viewBox="0 0 16 16"><path d="M8 0v16M0 8h16" stroke="currentColor" strokeWidth="2.400" /></svg>
        </NewTab>
        <WindowButtons>
          <WindowButton aria-label="Minimize"><svg width="9" height="9" viewBox="0 0 9 9"><path d="M0 4.500h9" stroke="currentColor" strokeWidth="1.500" /></svg></WindowButton>
          <WindowButton aria-label="Maximize"><svg width="9" height="9" viewBox="0 0 9 9"><path d="M.7 1h7.600v7H.7z" fill="none" stroke="currentColor" strokeWidth="1.400" /></svg></WindowButton>
          <WindowButton $close aria-label="Close window"><CloseX size={8} /></WindowButton>
        </WindowButtons>
      </TabStrip>

      <Toolbar>
        <NavButtons>
          <button aria-label="Back"><Arrow color="#4b4a46" /></button>
          <button aria-label="Forward"><Arrow flip color="#b4b2ae" /></button>
          <button aria-label="Reload">
            <svg width="24" height="24" viewBox="0 0 24 24" fill="none" stroke="#4b4a46" strokeWidth="2.200"><path d="M18.500 6.500a8 8 0 1 0 1.300 7.500" /><path d="M20.500 3v7h-7z" fill="#4b4a46" stroke="none" /></svg>
          </button>
        </NavButtons>
        <AddressBar>
          <svg width="14" height="17" viewBox="0 0 14 17"><rect x="1" y="6" width="12" height="10" rx="1.500" fill="#6b6965" /><path d="M4 7V4a3 3 0 0 1 6 0v3" fill="none" stroke="#6b6965" strokeWidth="1.800" /></svg>
          <AddressBox>
            <AddressHost>unifiedportal-mem.epfindia.gov.in</AddressHost>/memberinterface/online/claim/onlineClaimStatus?_HDIV_STATE_=4-15-8BC1F349B7B74D93FCD64F6447BA9D5A
          </AddressBox>
          <button type="button" aria-label="Bookmark this page">
            <svg width="18" height="18" viewBox="0 0 18 18"><path d="M9 1.500l2.200 5 5.300.5-4 3.600 1.200 5.400L9 13.200 4.300 16l1.200-5.400-4-3.600 5.300-.5z" fill="none" stroke="#5d5b57" strokeWidth="1.600" /></svg>
          </button>
        </AddressBar>
        <ToolbarIcons>
          <svg width="22" height="22" viewBox="-11 -11 22 22"><path d={gearPath(20, 10, 8.500)} fill="#4a20b0" /><circle r="8.600" fill="#5b2cc0" /><text y="4" textAnchor="middle" fontFamily="Liberation Sans" fontWeight="700" fontSize="10" fill="#e4dcff">Ws</text></svg>
          <svg width="21" height="22" viewBox="0 0 21 22" fill="none"><path d="M11 0q3 3-1 6t1 5M14 4q-4 2-2 5" stroke="#e9852c" strokeWidth="1.500" /><path d="M5 12h9M6 15h8M7 18h6M3 21q7 1.500 14-1M15 12q4 0 0 4" stroke="#4f7fa8" strokeWidth="1.500" /></svg>
          <Atom stroke="#fff" bg="#d3d2d0" />
          <Divider />
          <Avatar aria-label="Profile">S</Avatar>
          <svg width="12" height="20" viewBox="0 0 12 20" fill="#4b4a46"><circle cx="8" cy="3" r="2" /><circle cx="8" cy="10" r="2" /><circle cx="8" cy="17" r="2" /></svg>
        </ToolbarIcons>
      </Toolbar>

      <BookmarkBar>
        <Bookmark $short href="#apps">
          <Grid w={21} gap={7} cells={["#ea1f2b", "#ea1f2b", "#ea1f2b", "#16a765", "#3b82f6", "#f5b400", "#16a765", "#f5b400", "#f5b400"]} draw={(x, y, c) => <rect x={x + 2} y={y + 1} width="4.500" height="4.500" fill={c} />} />
          Apps
        </Bookmark>
        {bookmarks.map((b) => <Bookmark key={b.label} href="#bookmark">{b.icon}{b.label}</Bookmark>)}
      </BookmarkBar>

      <Viewport>
        <PageArea>
          <PageHeader>
            <Masthead>
              <LogoSlot><EpfoLogo /></LogoSlot>
              <MastheadTitles>
                <OrgName>EMPLOYEES' PROVIDENT FUND ORGANISATION, INDIA</OrgName>
                <Ministry>MINISTRY OF LABOUR &amp; EMPLOYMENT, GOVERNMENT OF INDIA</Ministry>
              </MastheadTitles>
              <MastheadSide>
                <UanBadge>UAN : 1010 3743 8026 /SANTOSH KUMAR PANDEY</UanBadge>
                <AccountTools>
                  <FontSizeButton>-A</FontSizeButton>
                  <FontSizeButton>A</FontSizeButton>
                  <FontSizeButton>A+</FontSizeButton>
                  <Logout href="#logout"><SignOutIcon />Logout</Logout>
                </AccountTools>
              </MastheadSide>
            </Masthead>
            <NavBar>
              <NavItem $tight href="#home"><FaHome size={17} />Home</NavItem>
              {["View", "Manage", "Account", "Online Services"].map((n) => (
                <NavItem key={n} href="#menu">{n}<Caret /></NavItem>
              ))}
            </NavBar>
          </PageHeader>

          <PageContent>
            <Breadcrumb>Online Services  /  Track Claim Status</Breadcrumb>

            <ClaimPanel title="Online Claim Status" space={46}>
              <EmptyNotice>Claim Record Not Found</EmptyNotice>
            </ClaimPanel>

            <ClaimPanel title="Transfer Claim Status" space={64}>
              <ClaimTable>
                <colgroup>
                  <Column $width={63} />
                  <Column $width={182} />
                  <Column $width={111} />
                  <Column $width={246} />
                  <Column $width={246} />
                  <Column $width={340} />
                  <Column />
                  <Column $width={151} />
                </colgroup>
                <thead>
                  <tr>
                    <th>Sr No</th>
                    <th>Tracking ID</th>
                    <th>Claim Type</th>
                    <th>Previous Account Number</th>
                    <th>Present Account Number</th>
                    <th>Claim Status</th>
                    <th>Attestation through</th>
                    <th>Printable Form 13</th>
                  </tr>
                </thead>
                <tbody>
                  {claims.map((c, i) => (
                    <tr key={c.id}>
                      <CenteredCell>{i + 1}</CenteredCell>
                      <td>{c.id}</td>
                      <td>Online Claim</td>
                      <td>{c.prev}</td>
                      <td>{c.now}</td>
                      <StatusCell>{c.selected ? <Selected>{c.status}</Selected> : c.status}</StatusCell>
                      <td>{c.by}</td>
                      <CenteredCell><DownloadLink href="#form13" aria-label={`Download form 13 for ${c.id}`}><FaDownload size={16} /></DownloadLink></CenteredCell>
                    </tr>
                  ))}
                </tbody>
              </ClaimTable>
            </ClaimPanel>

            <ClaimPanel title="Stop Auto Initiated Claim Cases" space={40}>
              <Alert><FaExclamationCircle size={18} />No Auto Initiated Claims Found.</Alert>
            </ClaimPanel>
          </PageContent>
        </PageArea>
        <ScrollTrack>
          <ScrollArrow />
          <ScrollThumb />
          <ScrollArrow $down />
        </ScrollTrack>
      </Viewport>

      <Dock>
        <Wallpaper />
        {dockApps.map((a) => (
          <DockItem key={a.name} aria-label={a.name} $active={a.active} $running={a.running}>{a.icon}</DockItem>
        ))}
        <AppsButton aria-label="Show applications">
          <Grid w={32} gap={12} cells={Array(9).fill("#f4f4f2")} draw={(x, y, c) => <circle cx={x + 4} cy={y + 4} r="3.200" fill={c} />} />
        </AppsButton>
      </Dock>
    </Desktop>
  );
}
